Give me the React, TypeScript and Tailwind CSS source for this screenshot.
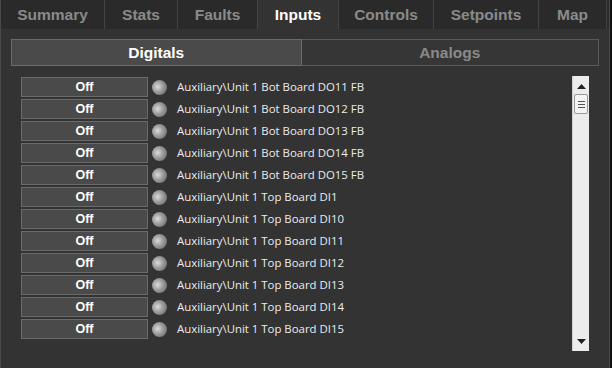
const tabs = [
  { label: "Summary", w: "w-[104px]" },
  { label: "Stats", w: "w-[73px]" },
  { label: "Faults", w: "w-[80px]" },
  { label: "Inputs", w: "w-[81px]", active: true },
  { label: "Controls", w: "w-[95px]" },
  { label: "Setpoints", w: "w-[105px]" },
  { label: "Map", w: "w-[68px]" },
];

const inputs = [
  "Auxiliary\\Unit 1 Bot Board DO11 FB",
  "Auxiliary\\Unit 1 Bot Board DO12 FB",
  "Auxiliary\\Unit 1 Bot Board DO13 FB",
  "Auxiliary\\Unit 1 Bot Board DO14 FB",
  "Auxiliary\\Unit 1 Bot Board DO15 FB",
  "Auxiliary\\Unit 1 Top Board DI1",
  "Auxiliary\\Unit 1 Top Board DI10",
  "Auxiliary\\Unit 1 Top Board DI11",
  "Auxiliary\\Unit 1 Top Board DI12",
  "Auxiliary\\Unit 1 Top Board DI13",
  "Auxiliary\\Unit 1 Top Board DI14",
  "Auxiliary\\Unit 1 Top Board DI15",
];

function InputRow({ label }: { label: string }) {
  return (
    <div className="flex h-[22px] items-center">
      <div className="flex h-[20px] w-[127px] items-center justify-center border border-[#6b6b6b] bg-[#4a4a4a] font-['Liberation_Sans',sans-serif] text-[12.5px] font-bold text-white">
        Off
      </div>
      <div className="ml-[4px] size-[15px] rounded-full bg-[radial-gradient(circle_at_38%_45%,#dcdcdc_0%,#a0a0a0_40%,#5a5a5a_100%)]" />
      <span className="ml-[10px] font-['Open_Sans',sans-serif] text-[11.4px] text-[#ececec]">
        {label}
      </span>
    </div>
  );
}

function Scrollbar() {
  return (
    <div className="flex h-[275px] w-[17px] flex-col items-center border-l border-[#d0d0d0] bg-[#ececec]">
      <svg width="9" height="5" viewBox="0 0 9 5" className="mt-[8px]">
        <path d="M4.5 0 L9 5 L0 5 Z" fill="#222" />
      </svg>
      <div className="mt-[5px] flex h-[20px] w-[14px] flex-col items-center justify-center gap-[2px] rounded-[2px] border border-[#9a9a9a] bg-[#f4f4f4]">
        <div className="h-[1px] w-[7px] bg-[#555]" />
        <div className="h-[1px] w-[7px] bg-[#555]" />
        <div className="h-[1px] w-[7px] bg-[#555]" />
      </div>
      <div className="flex-1" />
      <svg width="9" height="5" viewBox="0 0 9 5" className="mb-[7px]">
        <path d="M0 0 L9 0 L4.5 5 Z" fill="#222" />
      </svg>
    </div>
  );
}

export default function App() {
  return (
    <div className="h-[368px] w-[612px] bg-[#111] font-['Liberation_Sans',sans-serif]">
      <div className="h-full w-[610px] border-x border-[#4a4a4a] bg-[#333333]">
        <div className="flex h-[29px] bg-[#2a2a2a]">
          {tabs.map((t) => (
            <div
              key={t.label}
              className={`${t.w} flex items-center justify-center border-r border-[#444] text-[15.5px] font-bold ${
                t.active ? "bg-[#333333] text-white" : "text-[#8a8a8a]"
              }`}
            >
              {t.label}
            </div>
          ))}
        </div>
        <div className="px-[10px] pt-[10px]">
          <div className="flex h-[27px]">
            <div className="flex w-[291px] items-center justify-center border border-[#6b6b6b] bg-[#4a4a4a] text-[15.5px] font-bold text-white">
              Digitals
            </div>
            <div className="flex w-[298px] items-center justify-center border border-l-0 border-[#5a5a5a] bg-[#363636] text-[15.5px] font-bold text-[#8a8a8a]">
              Analogs
            </div>
          </div>
          <div className="mt-[10px] flex pl-[10px]">
            <div className="flex w-[551px] flex-col">
              {inputs.map((l) => (
                <InputRow key={l} label={l} />
              ))}
            </div>
            <Scrollbar />
          </div>
        </div>
      </div>
    </div>
  );
}
